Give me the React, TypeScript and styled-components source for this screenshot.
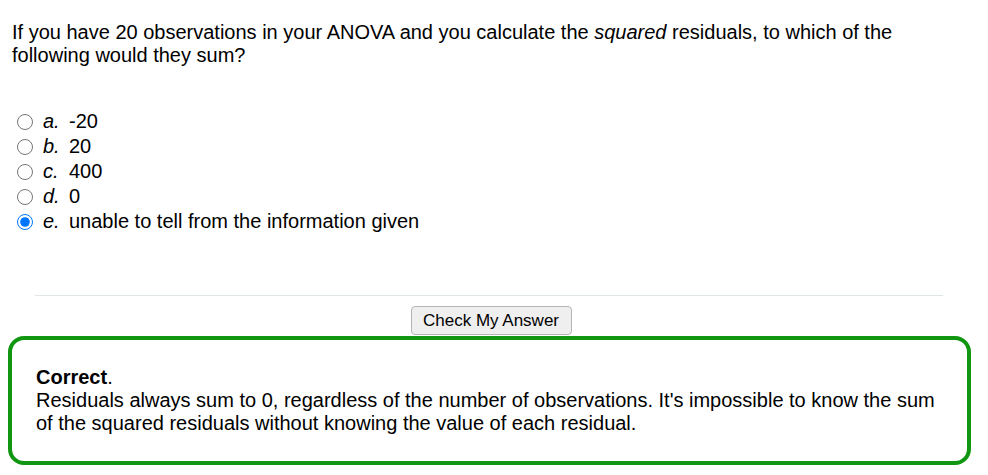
import React from "react";
import styled, { createGlobalStyle } from "styled-components";

const Global = createGlobalStyle`
  html, body { margin: 0; padding: 0; background: #fff; }
  body { font-family: "Liberation Sans", Arial, sans-serif; color: #000; }
`;

const Page = styled.div`
  width: 988px;
  padding: 21px 0 0 0;
  box-sizing: border-box;
`;

const Question = styled.p`
  margin: 0 0 0 12px;
  width: 900px;
  font-size: 20px;
  line-height: 23px;
`;

const Options = styled.div`
  margin: 42px 0 0 17px;
  display: flex;
  flex-direction: column;
`;

const Option = styled.label`
  display: flex;
  align-items: center;
  height: 25px;
  font-size: 20px;
`;

const Radio = styled.input`
  width: 16px;
  height: 16px;
  margin: 0 10px 0 0;
  accent-color: #0075ff;
`;

const Letter = styled.i`
  width: 26px;
`;

const Rule = styled.hr`
  margin: 61px 45px 0 35px;
  border: none;
  border-top: 1px solid #dfe6e6;
  height: 0;
`;

const ButtonRow = styled.div`
  display: flex;
  justify-content: center;
  margin-top: 10px;
  padding-right: 6px;
`;

const Button = styled.button`
  font-family: "Liberation Sans", Arial, sans-serif;
  font-size: 17px;
  width: 161px;
  height: 29px;
  background: #efefef;
  border: 1px solid #b4b4b4;
  border-radius: 4px;
  color: #000;
  padding: 0;
`;

const Feedback = styled.div`
  margin: 1px 17px 0 8px;
  border: 4px solid #119611;
  border-radius: 16px;
  padding: 26px 24px 26px 24px;
  font-size: 20px;
  line-height: 23px;
`;

const options = [
  { l: "a.", t: "-20" },
  { l: "b.", t: "20" },
  { l: "c.", t: "400" },
  { l: "d.", t: "0" },
  { l: "e.", t: "unable to tell from the information given", checked: true },
];

export default function App() {
  return (
    <Page>
      <Global />
      <Question>
        If you have 20 observations in your ANOVA and you calculate the <i>squared</i> residuals, to which of the following would they sum?
      </Question>
      <Options>
        {options.map((o) => (
          <Option key={o.l}>
            <Radio type="radio" name="q" defaultChecked={!!o.checked} />
            <Letter>{o.l}</Letter>
            <span>{o.t}</span>
          </Option>
        ))}
      </Options>
      <Rule />
      <ButtonRow>
        <Button>Check My Answer</Button>
      </ButtonRow>
      <Feedback>
        <b>Correct</b>.
        <br />
        Residuals always sum to 0, regardless of the number of observations. It's impossible to know the sum of the squared residuals without knowing the value of each residual.
      </Feedback>
    </Page>
  );
}
